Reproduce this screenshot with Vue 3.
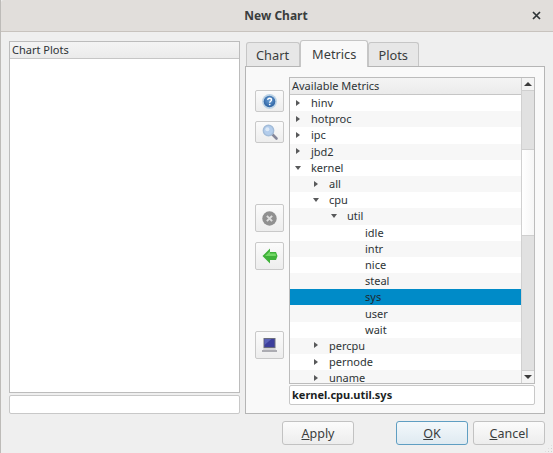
<script setup>
const tabs = [
  { label: 'Chart', active: false },
  { label: 'Metrics', active: true },
  { label: 'Plots', active: false },
]
const rows = [
  { t: 'hinv', d: 0, a: 'r' }, { t: 'hotproc', d: 0, a: 'r' }, { t: 'ipc', d: 0, a: 'r' }, { t: 'jbd2', d: 0, a: 'r' },
  { t: 'kernel', d: 0, a: 'd' }, { t: 'all', d: 1, a: 'r' }, { t: 'cpu', d: 1, a: 'd' }, { t: 'util', d: 2, a: 'd' },
  { t: 'idle', d: 3 }, { t: 'intr', d: 3 }, { t: 'nice', d: 3 }, { t: 'steal', d: 3 }, { t: 'sys', d: 3, sel: true },
  { t: 'user', d: 3 }, { t: 'wait', d: 3 }, { t: 'percpu', d: 1, a: 'r' }, { t: 'pernode', d: 1, a: 'r' }, { t: 'uname', d: 1, a: 'r' },
]
</script>

<template>
  <div class="window">
    <header class="titlebar">
      <span class="title">New Chart</span>
      <svg class="close" width="9" height="9" viewBox="0 0 9 9"><path d="M1 1l7 7M8 1L1 8" stroke="#2e3436" stroke-width="1.7" fill="none"/></svg>
    </header>
    <main class="body">
      <div class="top">
        <section class="left">
          <div class="plots">
            <div class="header">Chart Plots</div>
          </div>
          <div class="input left-input"></div>
        </section>
        <section class="right">
          <div class="tabs">
            <div v-for="t in tabs" :key="t.label" class="tab" :class="{ active: t.active }">{{ t.label }}</div>
          </div>
          <div class="pane">
            <div class="tools">
              <button class="tool t-help">
                <svg width="17" height="17" viewBox="0 0 17 17">
                  <defs><radialGradient id="hb" cx="50%" cy="40%" r="60%"><stop offset="0" stop-color="#6fa3d8"/><stop offset="1" stop-color="#2a5f9f"/></radialGradient></defs>
                  <circle cx="8.5" cy="8.5" r="7.4" fill="#bcd3e6"/>
                  <circle cx="8.5" cy="8.5" r="5.8" fill="url(#hb)"/>
                  <path d="M6.6 6.9c.2-1.2 1.1-1.7 2-1.7 1.1 0 1.9.7 1.9 1.7 0 1.4-1.8 1.4-1.8 2.8" stroke="#fff" stroke-width="1.4" fill="none"/>
                  <circle cx="8.7" cy="11.5" r=".85" fill="#fff"/>
                </svg>
              </button>
              <button class="tool t-search">
                <svg width="18" height="18" viewBox="0 0 18 18">
                  <path d="M10.5 10.5l5 5" stroke="#85879a" stroke-width="2.6" stroke-linecap="round"/>
                  <circle cx="7.5" cy="7.5" r="5.2" fill="#b3cdec" stroke="#a3bcd8" stroke-width="1.4"/>
                  <circle cx="6.4" cy="6.2" r="2" fill="#dce9f7"/>
                </svg>
              </button>
              <button class="tool t-delete">
                <svg width="17" height="17" viewBox="0 0 17 17">
                  <circle cx="8.5" cy="8.5" r="7.2" fill="#909090"/>
                  <path d="M5.9 5.9l5.2 5.2M11.1 5.9l-5.2 5.2" stroke="#dcdcdc" stroke-width="2"/>
                </svg>
              </button>
              <button class="tool t-arrow">
                <svg width="16" height="16" viewBox="0 0 16 16">
                  <path d="M0.5 8L8 0.5V4H14L15.5 8L14 12H8V15.5Z" fill="#3fb23a"/>
                  <path d="M3 8L8 3.2V5.5H13.5L14 8Z" fill="#72d765"/>
                </svg>
              </button>
              <button class="tool t-computer">
                <svg width="17" height="17" viewBox="0 0 17 17">
                  <rect x="2.5" y="1" width="12" height="10" fill="#6a6d7c"/>
                  <rect x="3.5" y="2" width="10" height="8" fill="#3c3e9c"/>
                  <path d="M3.5 2h7l-7 6z" fill="#5a62b8"/>
                  <path d="M2.5 11h12l.5 2H2z" fill="#d4d4d6"/>
                  <path d="M1 13h15v2H1z" fill="#acacb2"/>
                </svg>
              </button>
            </div>
            <div class="metrics">
              <div class="tree">
                <div class="tree-main">
                  <div class="header tree-header">Available Metrics</div>
                  <div class="rows">
                    <div v-for="(r, i) in rows" :key="r.t" class="row" :class="{ alt: i % 2 === 1, sel: r.sel, [`depth${r.d}`]: true }">
                      <span class="arrow" :class="r.a"></span>
                      <span class="label">{{ r.t }}</span>
                    </div>
                  </div>
                </div>
                <div class="scrollbar">
                  <div class="sb-btn"><span class="up"></span></div>
                  <div class="sb-track sb-before"></div>
                  <div class="sb-thumb"></div>
                  <div class="sb-track sb-after"></div>
                  <div class="sb-btn"><span class="down"></span></div>
                </div>
              </div>
              <div class="input metric-input">kernel.cpu.util.sys</div>
            </div>
          </div>
        </section>
      </div>
      <footer class="actions">
        <button class="btn apply"><span><u>A</u>pply</span></button>
        <button class="btn ok"><span><u>O</u>K</span></button>
        <button class="btn cancel"><span><u>C</u>ancel</span></button>
        <span class="grip"></span>
      </footer>
    </main>
  </div>
</template>

<style scoped>
.window {
  width: 553px;
  height: 453px;
  box-sizing: border-box;
  display: flex;
  flex-direction: column;
  background: #efefef;
  color: #2e3436;
  font-family: "Noto Sans", "Open Sans", sans-serif;
  font-size: 11px;
  border-left: 1px solid #bdbbb8;
  overflow: hidden;
  position: relative;
}
.titlebar {
  height: 32px;
  flex: none;
  box-sizing: border-box;
  display: flex;
  align-items: center;
  justify-content: center;
  position: relative;
  padding-right: 2px;
  background: #e1dedb;
  border-bottom: 1px solid #c8c3be;
  border-top-left-radius: 3px;
}
.title {
  font-weight: 700;
  font-size: 12px;
  color: #3a3d3d;
}
.close {
  position: absolute;
  right: 12px;
  top: 11px;
}
.body {
  flex: 1;
  display: flex;
  flex-direction: column;
  padding: 9px 8px 8px 8px;
  min-height: 0;
}
.top {
  display: flex;
  gap: 5px;
  height: 373px;
}
.left {
  width: 231px;
  display: flex;
  flex-direction: column;
  gap: 2px;
}
.plots {
  flex: 1;
  background: #fff;
  border: 1px solid #bcbcbc;
  box-sizing: border-box;
}
.header {
  height: 17px;
  box-sizing: border-box;
  padding-left: 2px;
  line-height: 15px;
  background: linear-gradient(#f4f4f4, #ebebeb);
  border-bottom: 1px solid #c6c6c6;
}
.left-input {
  height: 19px;
}
.input {
  box-sizing: border-box;
  background: #fff;
  border: 1px solid #c8c8c8;
  border-radius: 2px;
}
.right {
  flex: 1;
  display: flex;
  flex-direction: column;
  min-width: 0;
}
.tabs {
  display: flex;
  height: 25px;
  padding-left: 1px;
  align-items: flex-end;
  position: relative;
  z-index: 1;
}
.tab {
  height: 24px;
  box-sizing: border-box;
  padding: 0 10px 0 9px;
  font-size: 12.8px;
  line-height: 24px;
  background: #e7e7e7;
  border: 1px solid #c6c6c6;
  border-bottom: none;
  border-radius: 3px 3px 0 0;
  color: #3a3d3d;
}
.tab.active {
  height: 27px;
  background: #f9f9f9;
  line-height: 26px;
  margin-bottom: -1px;
  padding: 0 11px;
}
.pane {
  flex: 1;
  display: flex;
  gap: 5px;
  background: #f9f9f9;
  border: 1px solid #b5b5b5;
  padding: 10px 9px 8px 9px;
  min-height: 0;
}
.tools {
  width: 29px;
  display: flex;
  flex-direction: column;
  padding-top: 13px;
}
.tool {
  width: 29px;
  height: 28px;
  padding: 0;
  display: flex;
  align-items: center;
  justify-content: center;
  background: linear-gradient(#fbfbfb, #ededed);
  border: 1px solid #c9c9c9;
  border-radius: 2px;
}
.t-help, .t-search { height: 22px; }
.t-search { margin-top: 9px; }
.t-delete { margin-top: 61px; }
.t-arrow { margin-top: 10px; }
.t-computer { margin-top: 61px; }
.metrics {
  flex: 1;
  display: flex;
  flex-direction: column;
  gap: 1px;
  min-width: 0;
}
.tree {
  height: 307px;
  flex: none;
  display: flex;
  box-sizing: border-box;
  background: #fff;
  border: 1px solid #bcbcbc;
  overflow: hidden;
}
.tree-main {
  flex: 1;
  min-width: 0;
}
.tree-header {
  height: 17px;
  padding-left: 2px;
}
.rows {
  height: 289px;
  overflow: hidden;
}
.row {
  height: 16.2px;
  line-height: 16px;
  position: relative;
  display: flex;
  align-items: center;
}
.row.alt { background: #f7f7f7; }
.row.sel { background: #008bc8; color: #1f2a30; }
.depth0 { padding-left: 5px; }
.depth1 { padding-left: 23px; }
.depth2 { padding-left: 41px; }
.depth3 { padding-left: 59px; }
.arrow {
  width: 16px;
  flex: none;
  position: relative;
  height: 8px;
}
.arrow.r::before {
  content: "";
  position: absolute;
  left: 1px;
  top: 0.5px;
  border-left: 4px solid #58595a;
  border-top: 3.5px solid transparent;
  border-bottom: 3.5px solid transparent;
}
.arrow.d::before {
  content: "";
  position: absolute;
  left: 0;
  top: 2px;
  border-top: 4px solid #58595a;
  border-left: 3.5px solid transparent;
  border-right: 3.5px solid transparent;
}
.scrollbar {
  width: 12px;
  flex: none;
  border-left: 1px solid #d0d0d0;
  display: flex;
  flex-direction: column;
}
.sb-btn {
  height: 12px;
  flex: none;
  display: flex;
  align-items: center;
  justify-content: center;
  background: #f4f4f4;
}
.up {
  border-bottom: 4px solid #3c3c3c;
  border-left: 4px solid transparent;
  border-right: 4px solid transparent;
}
.down {
  border-top: 4px solid #3c3c3c;
  border-left: 4px solid transparent;
  border-right: 4px solid transparent;
}
.sb-before {
  height: 60px;
  flex: none;
}
.sb-after {
  flex: 1;
}
.sb-track {
  background: #e1e1e1;
  box-sizing: border-box;
  border-top: 1px solid #cfcfcf;
  border-bottom: 1px solid #cfcfcf;
}
.sb-thumb {
  height: 85px;
  flex: none;
  background: linear-gradient(90deg, #ffffff, #f6f6f6);
}
.metric-input {
  height: 20px;
  font-weight: 700;
  line-height: 18px;
  padding-left: 2px;
  color: #1c1f1f;
}
.actions {
  display: flex;
  margin-top: 7px;
  padding-left: 273px;
}
.btn {
  height: 24px;
  padding: 0;
  width: 72px;
  font: inherit;
  font-size: 12.5px;
  color: #3a3d3d;
  background: linear-gradient(#fbfbfb, #ededed);
  border: 1px solid #c2c2c2;
  border-radius: 3px;
}
.ok {
  margin-left: 42px;
  border-color: #5f9ec2;
  background: linear-gradient(#f3f8fb, #dfeaf1);
}
.cancel { margin-left: 5px; }
.grip {
  position: absolute;
  right: 0;
  bottom: 0;
  width: 9px;
  height: 9px;
  background-image: radial-gradient(circle, #cfcfcf 0.8px, transparent 1px);
  background-size: 3px 3px;
  clip-path: polygon(100% 0, 100% 100%, 0 100%);
}
</style>
